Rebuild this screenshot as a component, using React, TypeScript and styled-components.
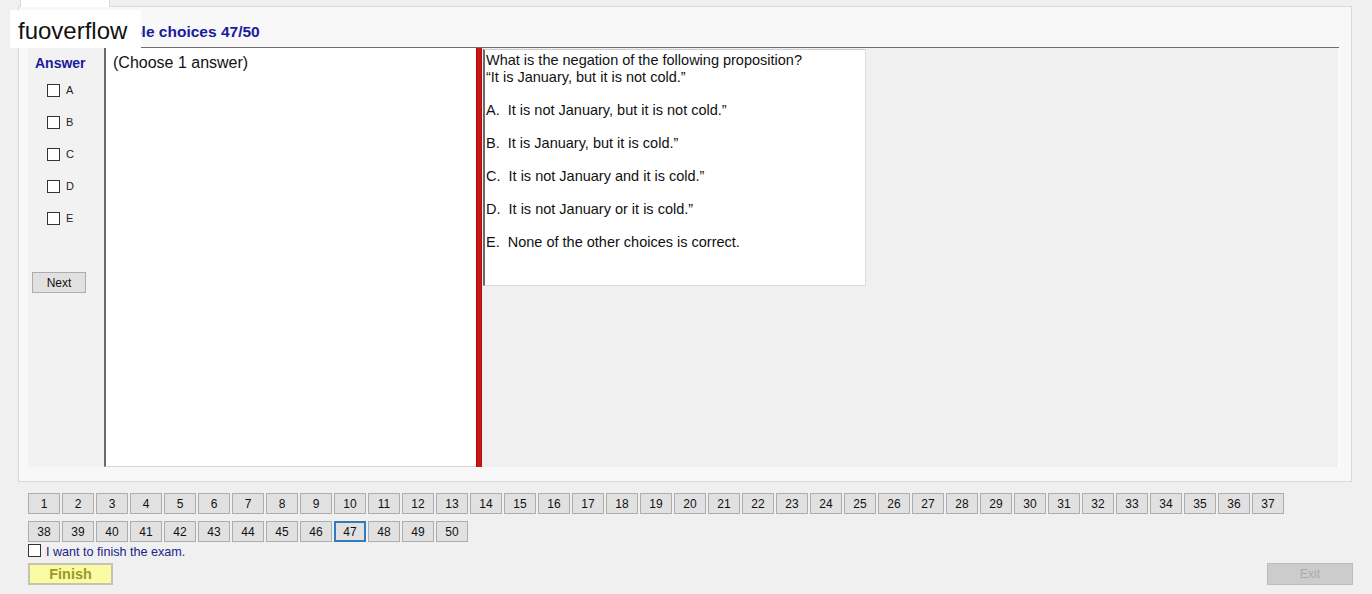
import React from "react";
import styled, { createGlobalStyle } from "styled-components";

const Global = createGlobalStyle`
  html, body { margin: 0; padding: 0; background: #f0f0f0; }
  body { font-family: "Liberation Sans", Arial, sans-serif; }
  * { box-sizing: border-box; }
`;

const Page = styled.div`
  position: relative;
  width: 1372px;
  height: 594px;
  background: #f0f0f0;
  overflow: hidden;
  font-family: "Liberation Sans", Arial, sans-serif;
`;

const Watermark = styled.div`
  position: absolute;
  left: 10px;
  top: 10px;
  width: 131px;
  height: 38px;
  background: #ffffff;
  color: #111;
  font-size: 24px;
  line-height: 35px;
  padding: 3px 0 0 8px;
  z-index: 5;
`;

const TabStrip = styled.div`
  height: 6px;
  padding-left: 20px;
`;

const Tab = styled.div`
  width: 90px;
  height: 7px;
  background: #ffffff;
  border-left: 1px solid #d9d9d9;
  border-right: 1px solid #d9d9d9;
  position: relative;
  z-index: 1;
`;

const TabPage = styled.div`
  margin-left: 18px;
  width: 1334px;
  height: 476px;
  border: 1px solid #dadada;
  background: #f8f8f8;
  padding: 16px 0 0 9px;
  display: flex;
  flex-direction: column;
`;

const Title = styled.div`
  margin-left: 68px;
  height: 17px;
  line-height: 17px;
  font-size: 15.5px;
  font-weight: bold;
  color: #1a1a9c;
`;

const Body = styled.div`
  margin-top: 7px;
  display: flex;
  height: 420px;
  width: 1311px;
`;

const AnswerColumn = styled.div`
  width: 76px;
  display: flex;
  flex-direction: column;
  padding-top: 8px;
  background: #f2f2f2;
`;

const AnswerLabel = styled.div`
  padding-left: 7px;
  height: 16px;
  line-height: 16px;
  font-size: 14px;
  font-weight: bold;
  color: #1a1a9c;
`;

const Choices = styled.div`
  margin-top: 3px;
  display: flex;
  flex-direction: column;
`;

const ChoiceRow = styled.div`
  height: 32px;
  display: flex;
  align-items: center;
  padding-left: 19px;
  gap: 6px;
  font-size: 11px;
  color: #222;
`;

const Box = styled.span`
  flex: none;
  width: 13px;
  height: 13px;
  border: 1px solid #333;
  background: #fff;
  display: inline-block;
`;

const NextButton = styled.button`
  margin: 38px 0 0 4px;
  width: 54px;
  height: 21px;
  padding: 0;
  background: #e1e1e1;
  border: 1px solid #adadad;
  font-family: "Liberation Sans", Arial, sans-serif;
  font-size: 12px;
  color: #111;
`;

const Split = styled.div`
  flex: 1;
  display: flex;
  border-top: 1px solid #6e6e6e;
`;

const LeftBox = styled.div`
  width: 372px;
  background: #ffffff;
  border-left: 2px solid #6a6a6a;
  border-bottom: 1px solid #d5d5d5;
  padding: 6px 0 0 7px;
  font-size: 16px;
  color: #111;
`;

const Splitter = styled.div`
  width: 6px;
  background: #cc1616;
  border-left: 1px solid #a30c0c;
  border-right: 1px solid #b11010;
`;

const RightPane = styled.div`
  flex: 1;
  background: #f0f0f0;
  border-right: 1px solid #ffffff;
  padding: 1px 0 0 1px;
`;

const QuestionBox = styled.div`
  width: 383px;
  height: 237px;
  background: #ffffff;
  border-left: 2px solid #6a6a6a;
  border-top: 1px solid #cfcfcf;
  border-right: 1px solid #dcdcdc;
  border-bottom: 1px solid #dcdcdc;
  padding: 2px 0 0 1px;
  font-size: 14.5px;
  line-height: 16.5px;
  color: #111;
  white-space: pre;
`;

const Footer = styled.div`
  padding: 11px 19px 0 28px;
  display: flex;
  flex-direction: column;
`;

const NavGrid = styled.div`
  display: grid;
  grid-template-columns: repeat(37, 32px);
  column-gap: 2px;
  row-gap: 7px;
`;

const NavButton = styled.button<{ $active?: boolean }>`
  height: 21px;
  padding: 0;
  background: #e1e1e1;
  border: ${(p) => (p.$active ? "2px solid #2f7bbd" : "1px solid #adadad")};
  font-family: "Liberation Sans", Arial, sans-serif;
  font-size: 12px;
  color: #111;
`;

const FinishCheck = styled.label`
  margin-top: 2px;
  display: flex;
  align-items: flex-start;
  gap: 5px;
  height: 16px;
  line-height: 17px;
  font-size: 12.6px;
  color: #22228a;
`;

const ButtonRow = styled.div`
  margin-top: 3px;
  display: flex;
  justify-content: space-between;
`;

const FinishButton = styled.button`
  width: 85px;
  height: 22px;
  padding: 0;
  background: #fbfba4;
  border: 2px solid #c4c4b0;
  font-family: "Liberation Sans", Arial, sans-serif;
  font-size: 14.5px;
  font-weight: bold;
  color: #9a9a24;
`;

const ExitButton = styled.button`
  width: 86px;
  height: 22px;
  padding: 0;
  background: #cccccc;
  border: 1px solid #bdbdbd;
  font-family: "Liberation Sans", Arial, sans-serif;
  font-size: 12px;
  color: #ababab;
`;

const question = `What is the negation of the following proposition?
“It is January, but it is not cold.”

A.  It is not January, but it is not cold.”

B.  It is January, but it is cold.”

C.  It is not January and it is cold.”

D.  It is not January or it is cold.”

E.  None of the other choices is correct.`;

export default function App() {
  const nums = Array.from({ length: 50 }, (_, i) => i + 1);
  return (
    <Page>
      <Global />
      <Watermark>fuoverflow</Watermark>
      <TabStrip>
        <Tab />
      </TabStrip>
      <TabPage>
        <Title>Multiple choices 47/50</Title>
        <Body>
          <AnswerColumn>
            <AnswerLabel>Answer</AnswerLabel>
            <Choices>
              {["A", "B", "C", "D", "E"].map((l) => (
                <ChoiceRow key={l}>
                  <Box />
                  {l}
                </ChoiceRow>
              ))}
            </Choices>
            <NextButton>Next</NextButton>
          </AnswerColumn>
          <Split>
            <LeftBox>(Choose 1 answer)</LeftBox>
            <Splitter />
            <RightPane>
              <QuestionBox>{question}</QuestionBox>
            </RightPane>
          </Split>
        </Body>
      </TabPage>
      <Footer>
        <NavGrid>
          {nums.map((n) => (
            <NavButton key={n} $active={n === 47}>
              {n}
            </NavButton>
          ))}
        </NavGrid>
        <FinishCheck>
          <Box />I want to finish the exam.
        </FinishCheck>
        <ButtonRow>
          <FinishButton>Finish</FinishButton>
          <ExitButton>Exit</ExitButton>
        </ButtonRow>
      </Footer>
    </Page>
  );
}
